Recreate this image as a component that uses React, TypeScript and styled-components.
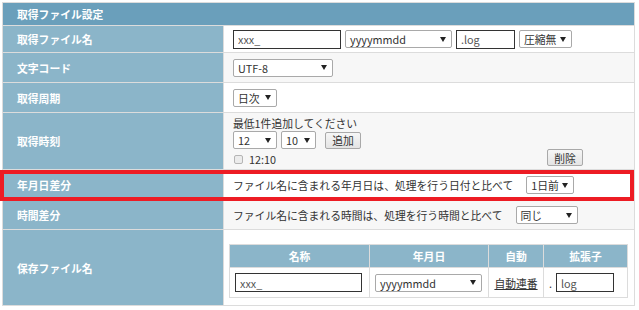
import React from 'react'
import styled, { createGlobalStyle } from 'styled-components'

const GlobalStyle = createGlobalStyle`
  body {
    margin: 0;
    background: #fff;
    font-family: "Noto Sans CJK JP", "Liberation Sans", sans-serif;
    font-size: 10.8px;
    color: #333;
  }
`

const Page = styled.div`
  position: relative;
  width: 639px;
  height: 310px;
  padding: 2px 0 0 2px;
  box-sizing: border-box;
`

const Form = styled.div`
  display: grid;
  grid-template-columns: 220px 410px;
  grid-template-rows: 22px 26px 29px 29px 56px 30px 28px 75px;
  gap: 1px;
  width: max-content;
  background: #dcdcdc;
  border: 1px solid #dcdcdc;
`

const Header = styled.div`
  grid-column: 1 / -1;
  display: flex;
  align-items: center;
  padding-left: 14px;
  background: #6a9fbb;
  color: #fff;
  font-weight: bold;
`

const Label = styled.div`
  display: flex;
  align-items: center;
  padding-left: 14px;
  background: #8bb5c9;
  color: #fff;
  font-weight: bold;
`

const Value = styled.div<{ $alt?: boolean }>`
  display: flex;
  align-items: center;
  gap: 4px;
  padding-left: 9px;
  background: ${p => (p.$alt ? '#f7f7f7' : '#fff')};
  white-space: nowrap;
`

const TimeValue = styled(Value)`
  flex-direction: column;
  align-items: flex-start;
  gap: 0;
  padding-top: 3px;
`

const SaveValue = styled(Value)`
  align-items: flex-start;
  padding: 14px 0 0 5px;
`

const Hint = styled.div`
  line-height: 15px;
`

const Line = styled.div`
  display: flex;
  align-items: center;
  gap: 4px;
`

const TimeList = styled.div`
  display: flex;
  justify-content: space-between;
  align-items: flex-end;
  width: 350px;
`

const TimeItem = styled.div`
  display: flex;
  align-items: center;
  gap: 6px;
  padding: 0 0 1px 1px;
  line-height: 12px;
`

const Check = styled.span`
  width: 9px;
  height: 9px;
  border: 1px solid #b5b5b5;
  border-radius: 2px;
  background: #ececec;
  box-sizing: border-box;
`

const TextBox = styled.input<{ $w: number }>`
  width: ${p => p.$w}px;
  height: 19px;
  padding: 0 4px;
  border: 1px solid #333;
  box-sizing: border-box;
  font: inherit;
  color: #555;
  background: #fff;
  outline: none;
`

const Select = styled.div<{ $w: number }>`
  display: flex;
  align-items: center;
  justify-content: space-between;
  width: ${p => p.$w}px;
  height: 18px;
  padding: 0 5px 0 4px;
  border: 1px solid #a9a9a9;
  border-radius: 2px;
  box-sizing: border-box;
  background: #fff;
  color: #333;
`

const Arrow = styled.span`
  width: 0;
  height: 0;
  border-left: 3px solid transparent;
  border-right: 3px solid transparent;
  border-top: 5px solid #222;
`

const Button = styled.div<{ $gap?: number }>`
  display: flex;
  align-items: center;
  justify-content: center;
  width: 36px;
  height: 17px;
  margin-left: ${p => p.$gap ?? 0}px;
  border: 1px solid #a9a9a9;
  border-radius: 2px;
  box-sizing: border-box;
  background: linear-gradient(#f6f6f6, #e4e4e4);
  color: #333;
`

const Note = styled.span`
  margin-right: 9px;
`

const Names = styled.div`
  display: grid;
  grid-template-columns: 139px 118px 54px 83px;
  grid-template-rows: 22px 29px;
  gap: 1px;
  background: #dcdcdc;
  border: 1px solid #dcdcdc;
`

const NameHead = styled.div`
  display: flex;
  align-items: center;
  justify-content: center;
  background: #8bb5c9;
  color: #fff;
  font-weight: bold;
`

const NameCell = styled.div<{ $center?: boolean }>`
  display: flex;
  align-items: center;
  justify-content: ${p => (p.$center ? 'center' : 'flex-start')};
  gap: 4px;
  padding-left: ${p => (p.$center ? 0 : 5)}px;
  background: #fff;
`

const Link = styled.span`
  text-decoration: underline;
  color: #333;
`

const Highlight = styled.div`
  position: absolute;
  left: 0;
  top: 170px;
  width: 634px;
  height: 31px;
  border: 4px solid #ed1c24;
  box-sizing: border-box;
  pointer-events: none;
`

function Pick({ w, children }: { w: number; children: React.ReactNode }) {
  return (
    <Select $w={w}>
      <span>{children}</span>
      <Arrow />
    </Select>
  )
}

export default function App() {
  return (
    <Page>
      <GlobalStyle />
      <Form>
        <Header>取得ファイル設定</Header>

        <Label>取得ファイル名</Label>
        <Value>
          <TextBox $w={108} defaultValue="xxx_" readOnly />
          <Pick w={107}>yyyymmdd</Pick>
          <TextBox $w={59} defaultValue=".log" readOnly />
          <Pick w={53}>圧縮無</Pick>
        </Value>

        <Label>文字コード</Label>
        <Value $alt>
          <Pick w={100}>UTF-8</Pick>
        </Value>

        <Label>取得周期</Label>
        <Value>
          <Pick w={44}>日次</Pick>
        </Value>

        <Label>取得時刻</Label>
        <TimeValue $alt>
          <Hint>最低1件追加してください</Hint>
          <Line>
            <Pick w={44}>12</Pick>
            <Pick w={35}>10</Pick>
            <Button $gap={5}>追加</Button>
          </Line>
          <TimeList>
            <TimeItem>
              <Check />
              <span>12:10</span>
            </TimeItem>
            <Button>削除</Button>
          </TimeList>
        </TimeValue>

        <Label>年月日差分</Label>
        <Value>
          <Note>ファイル名に含まれる年月日は、処理を行う日付と比べて</Note>
          <Pick w={48}>1日前</Pick>
        </Value>

        <Label>時間差分</Label>
        <Value $alt>
          <Note>ファイル名に含まれる時間は、処理を行う時間と比べて</Note>
          <Pick w={62}>同じ</Pick>
        </Value>

        <Label>保存ファイル名</Label>
        <SaveValue>
          <Names>
            <NameHead>名称</NameHead>
            <NameHead>年月日</NameHead>
            <NameHead>自動</NameHead>
            <NameHead>拡張子</NameHead>
            <NameCell>
              <TextBox $w={127} defaultValue="xxx_" readOnly />
            </NameCell>
            <NameCell>
              <Pick w={107}>yyyymmdd</Pick>
            </NameCell>
            <NameCell $center>
              <Link>自動連番</Link>
            </NameCell>
            <NameCell>
              <span>.</span>
              <TextBox $w={58} defaultValue="log" readOnly />
            </NameCell>
          </Names>
        </SaveValue>
      </Form>
      <Highlight />
    </Page>
  )
}
